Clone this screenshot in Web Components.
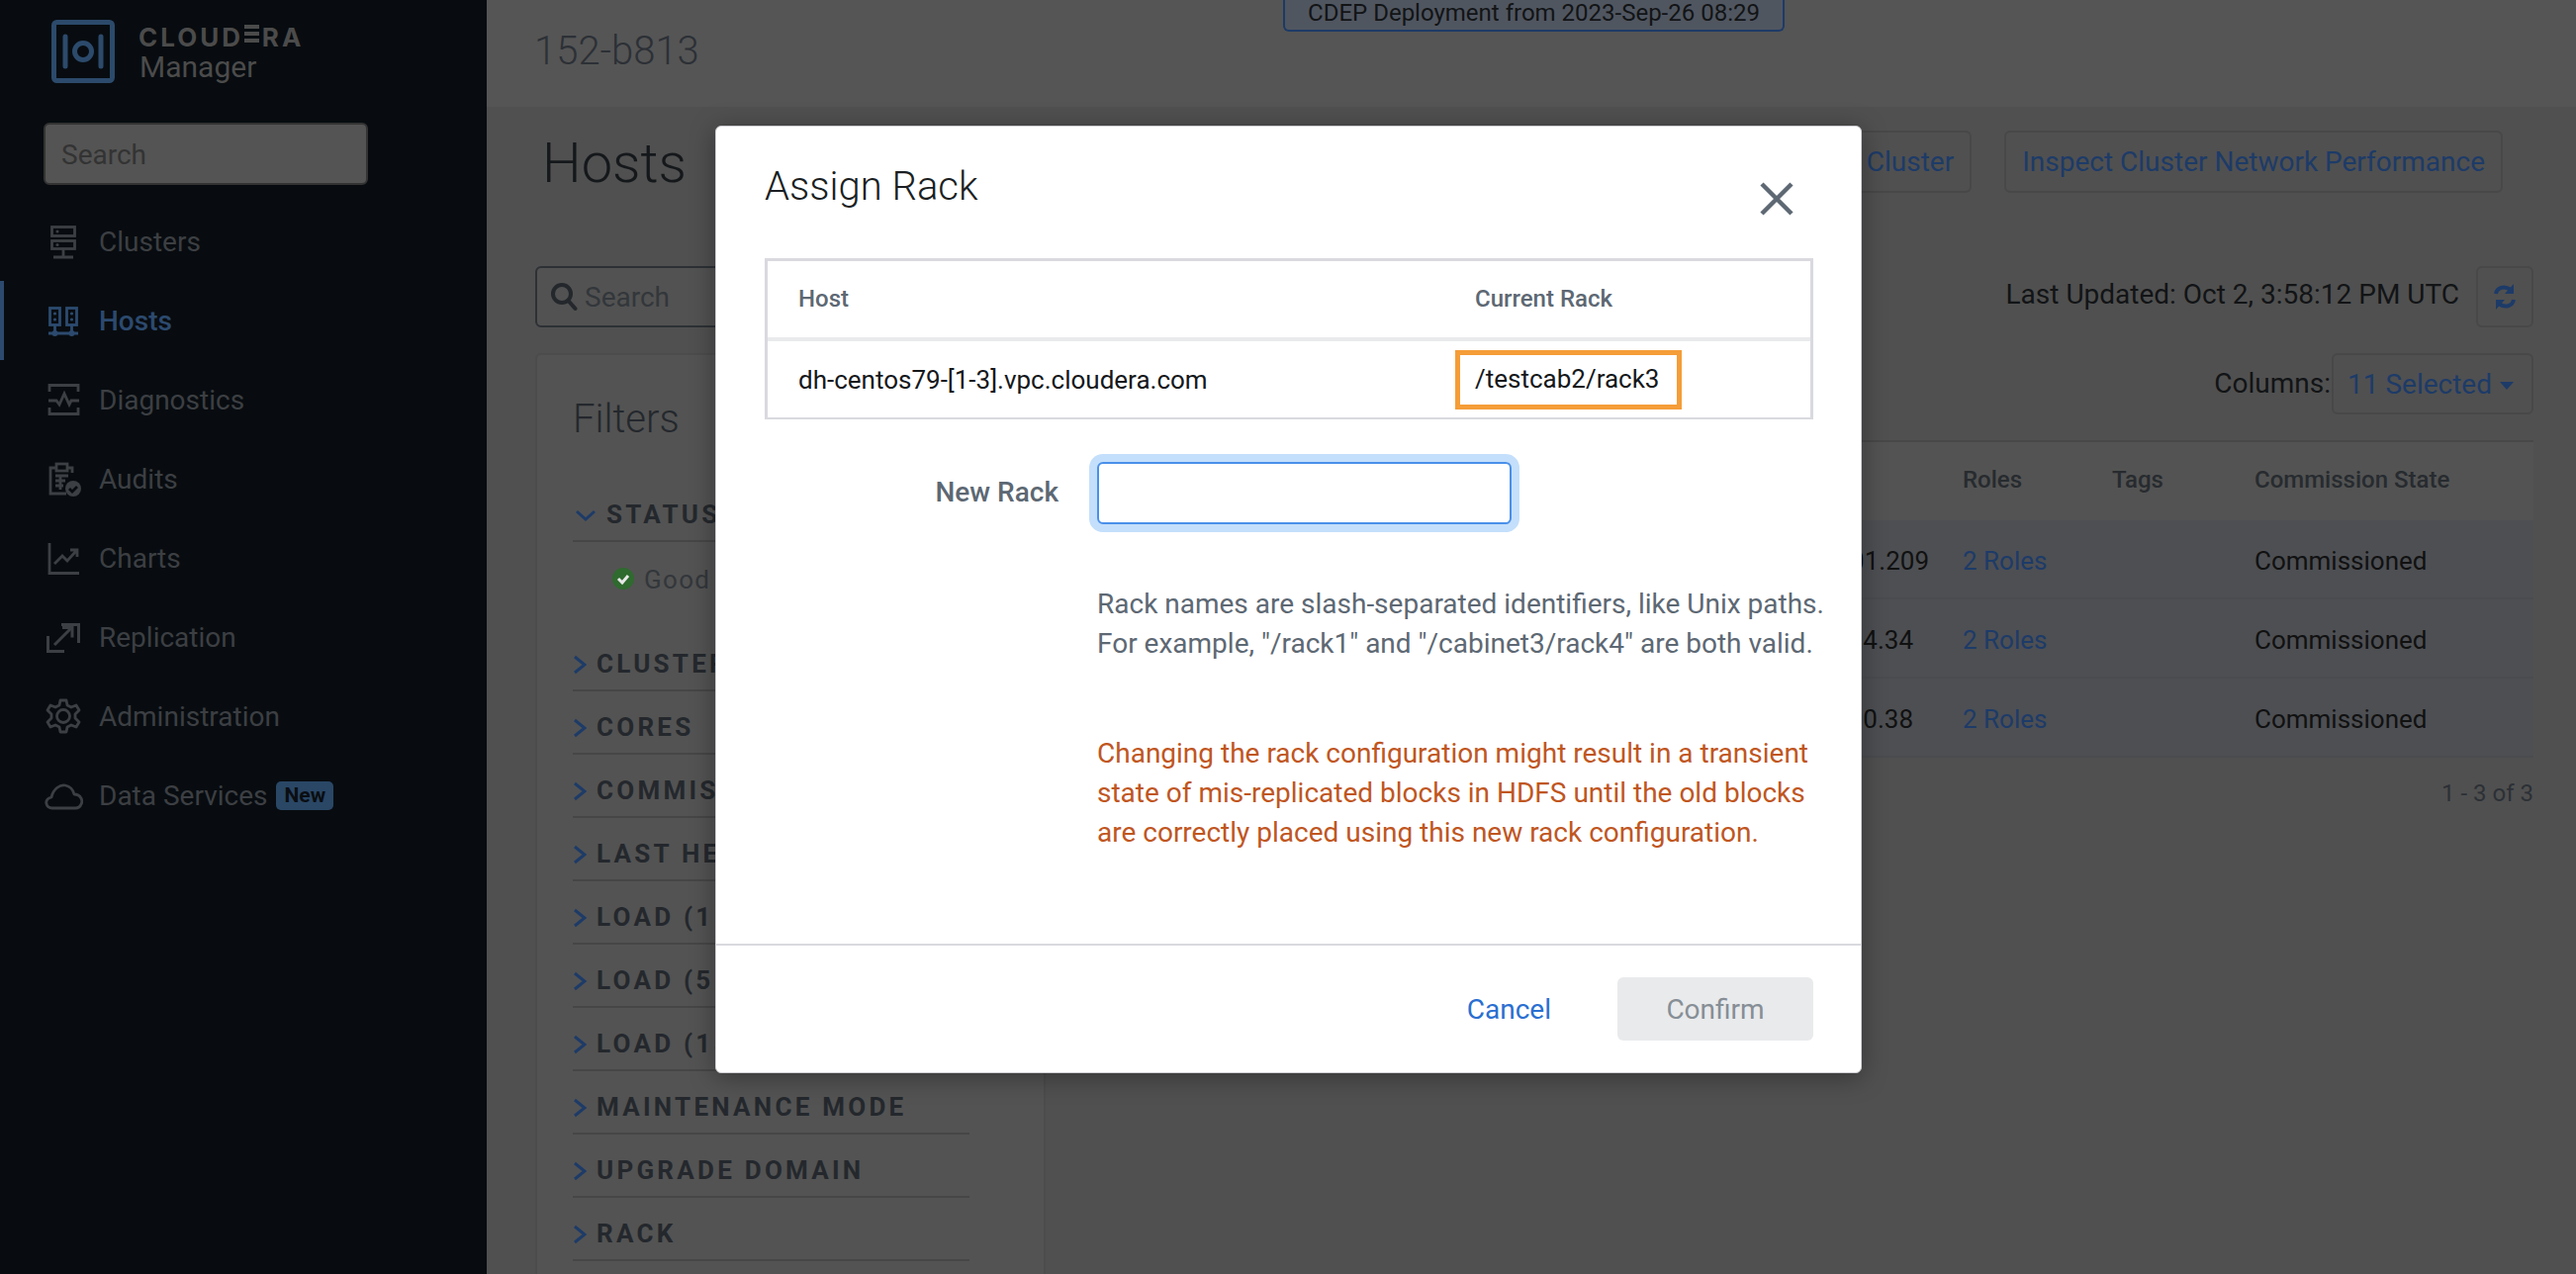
<!DOCTYPE html>
<html><head><meta charset="utf-8"><title>Assign Rack</title>
<style>
html,body{margin:0;padding:0;height:100%;overflow:hidden;background:#505050;font-family:Roboto,"Liberation Sans",sans-serif;font-size:28px;color:#121416}
cm-app{display:flex;width:2604px;height:1288px;overflow:hidden}
</style></head><body>
<cm-app>
  <cm-sidebar>
    <cm-nav-item icon="clusters">Clusters</cm-nav-item>
    <cm-nav-item icon="hosts" active>Hosts</cm-nav-item>
    <cm-nav-item icon="diagnostics">Diagnostics</cm-nav-item>
    <cm-nav-item icon="audits">Audits</cm-nav-item>
    <cm-nav-item icon="charts">Charts</cm-nav-item>
    <cm-nav-item icon="replication">Replication</cm-nav-item>
    <cm-nav-item icon="administration">Administration</cm-nav-item>
    <cm-nav-item icon="cloud" badge="New">Data Services</cm-nav-item>
  </cm-sidebar>
  <cm-main>
    <cm-filter-panel>
      <cm-filter-row open>STATUS<span slot="body">Good Health</span></cm-filter-row>
      <cm-filter-row>CLUSTERS</cm-filter-row>
      <cm-filter-row>CORES</cm-filter-row>
      <cm-filter-row>COMMISSION STATE</cm-filter-row>
      <cm-filter-row>LAST HEARTBEAT</cm-filter-row>
      <cm-filter-row>LOAD (1 MINUTE)</cm-filter-row>
      <cm-filter-row>LOAD (5 MINUTES)</cm-filter-row>
      <cm-filter-row>LOAD (15 MINUTES)</cm-filter-row>
      <cm-filter-row>MAINTENANCE MODE</cm-filter-row>
      <cm-filter-row>UPGRADE DOMAIN</cm-filter-row>
      <cm-filter-row>RACK</cm-filter-row>
    </cm-filter-panel>
  </cm-main>
  <cm-dialog></cm-dialog>
</cm-app>
<script>
const ICONS={
clusters:'<rect x="8.500" y="5.500" width="23" height="9"/><rect x="8.500" y="19.500" width="23" height="8"/><path d="M20 28v8M10 36h20"/><circle cx="14" cy="10" r="1.500" fill="currentColor" stroke="none"/><circle cx="14" cy="23.500" r="1.500" fill="currentColor" stroke="none"/>',
hosts:'<rect x="6.500" y="7.500" width="10" height="17"/><rect x="23.500" y="7.500" width="10" height="17"/><path d="M11.500 25v8M28.500 25v8M5 33h30"/><circle cx="11.500" cy="13" r="1.600" fill="currentColor" stroke="none"/><circle cx="11.500" cy="19" r="1.600" fill="currentColor" stroke="none"/><circle cx="28.500" cy="13" r="1.600" fill="currentColor" stroke="none"/><circle cx="28.500" cy="19" r="1.600" fill="currentColor" stroke="none"/><circle cx="11.500" cy="33" r="3" fill="currentColor" stroke="none"/><circle cx="28.500" cy="33" r="3" fill="currentColor" stroke="none"/>',
diagnostics:'<path d="M6 12V5.500h29V12M6 28v6.500h29V28M5 21h8l3 4 5-11 5 11 2-4h8"/>',
audits:'<path d="M29 14V9h-5M13 9H7v26h16"/><rect x="13" y="5" width="11" height="7"/><path d="M12 17h13M12 22h10M12 27h8M17 17v14"/><circle cx="30" cy="30" r="8" fill="currentColor" stroke="none"/><path d="M26 30l3 3 5-5" stroke="#080c10"/>',
charts:'<path d="M6 5v30.500h30"/><path d="M11 26l8-8 5 5 9-10M27 12h7v7"/>',
replication:'<path d="M18 7.500h17.500V26M4.500 19v15.500H21M11 28l17-17" stroke-width="3"/><path d="M19 10.500h10v10" stroke-width="3"/>',
administration:'<path d="M17 4h6l1 5 4 2 5-2 3 5-4 4v4l4 4-3 5-5-2-4 2-1 5h-6l-1-5-4-2-5 2-3-5 4-4v-4l-4-4 3-5 5 2 4-2z" stroke-linejoin="round"/><circle cx="20" cy="20" r="6.500"/>',
cloud:'<path d="M9 33C2 33 0 24 8 22 10 13 17 9 22 10c5 1 8 5 9 9 7 0 9 7 7 10-1 3-4 4-6 4z" stroke-linejoin="round"/>'};
function def(name,html,init){customElements.define(name,class extends HTMLElement{constructor(){super();this.attachShadow({mode:'open'}).innerHTML=html;}connectedCallback(){if(init)init.call(this,this.shadowRoot);}});}

def('cm-logo',`<style>
:host{display:flex;align-items:center;gap:24px;margin-left:52px;height:64px}
svg{width:64px;height:64px;display:block}
.t{display:flex;flex-direction:column;padding-top:8px}
.c{font:700 26px/24px Inter,"Liberation Sans",sans-serif;letter-spacing:3px;color:#4b4b4b;height:24px}
.e{position:relative;color:transparent;background:linear-gradient(#4b4b4b 0 4px,transparent 4px 7px,#4b4b4b 7px 11px,transparent 11px 14px,#4b4b4b 14px 18px) no-repeat 1px 3px/15px 18px}
.m{font:400 30px/36px Roboto,sans-serif;color:#4b4b4b;margin-left:1px}
</style><svg viewBox="0 0 64 64" fill="none" stroke="#2c4a6b" stroke-width="5"><rect x="2.500" y="2.500" width="59" height="59" rx="3"/><path d="M14 17v30M50 17v30" stroke-linecap="round"/><circle cx="32" cy="32" r="8.500"/></svg>
<div class="t"><div class="c">CLOUD<span class="e">E</span>RA</div><div class="m">Manager</div></div>`);

def('cm-sidebar',`<style>
:host{display:block;flex:0 0 492px;background:#080c10;padding-top:20px;box-sizing:border-box}
.s{margin:40px 0 0 44px;width:328px;height:63px;box-sizing:border-box;background:#545454;border:2px solid #333;border-radius:6px;padding-left:16px;line-height:61px;color:#333;font-size:28px}
nav{display:block;margin-top:17px}
</style><cm-logo></cm-logo><div class="s">Search</div><nav><slot></slot></nav>`);

def('cm-nav-item',`<style>
:host{display:flex;align-items:center;height:80px;padding-left:44px;color:#3c3f43;font-size:28px;line-height:32px;position:relative}
:host([active]){color:#2c4a6e;font-weight:500}
:host([active])::before{content:"";position:absolute;left:0;top:0;bottom:0;width:4px;background:#2c4a6e}
svg{width:40px;height:40px;margin-right:16px;flex:none;fill:none;stroke:currentColor;stroke-width:2.800}
.t{padding-top:1px}
.b{margin-left:9px;background:#2a4766;color:#0a0e12;font-weight:700;font-size:21px;line-height:29px;padding:0 8px;border-radius:5px}
</style><svg viewBox="0 0 40 40"></svg><span class="t"><slot></slot></span><span class="b" hidden></span>`,function(r){
 r.querySelector('svg').innerHTML=ICONS[this.getAttribute('icon')]||'';
 const b=r.querySelector('.b');if(this.hasAttribute('badge')){b.hidden=false;b.textContent=this.getAttribute('badge');}else b.remove();});

def('cm-btn',`<style>
:host{display:inline-flex;align-items:center;height:63px;box-sizing:border-box;border:2px solid #484848;border-radius:6px;padding:0 16px;color:#1d3b68;font-size:28px;white-space:nowrap}
</style><slot></slot>`);

def('cm-main',`<style>
:host{display:flex;flex-direction:column;flex:1;min-width:0;position:relative;background:#505050}
.hd{height:108px;background:#555;padding-left:48px;box-sizing:border-box;font-weight:300;font-size:40px;line-height:104px;color:#2c3036;flex:none}
.banner{position:absolute;left:805px;top:0;width:507px;height:32px;box-sizing:border-box;border:2px solid #1d3a66;border-top:0;border-radius:0 0 6px 6px;background:#505660;color:#121416;font-size:24px;line-height:24px;padding-top:1px;text-align:center}
.title{height:161px;flex:none;display:flex;padding:24px 74px 0 56px;box-sizing:border-box;gap:33px;align-items:flex-start}
h1{margin:0;font-weight:300;font-size:56px;line-height:66px;color:#15181b;flex:1}
.cols{display:grid;grid-template-columns:516px 1481px;gap:23px;padding-left:49px;flex:1;min-height:0}
.left{display:flex;flex-direction:column;gap:26px;min-height:0}
.search{height:62px;box-sizing:border-box;background:#525252;border:2px solid #2d3135;border-radius:6px;display:flex;align-items:center;gap:7px;padding-left:13px;color:#33373b;flex:none}
.search svg{width:28px;height:30px}
.right{display:flex;flex-direction:column;gap:26px}
.bar{display:flex;justify-content:flex-end;align-items:flex-start;height:62px;flex:none}
.lu{line-height:58px;margin-right:17px}
.col{line-height:62px;margin-right:1px}
.ic{width:58px;height:62px;padding:0;justify-content:center}
.dd{height:62px;padding:0 14px;width:204px}
.dd b{display:inline-block;border:7px solid transparent;border-top:8px solid #1d3b68;border-bottom:0;margin-left:8px;margin-top:4px}
</style>
<div class="hd">152-b813</div><div class="banner">CDEP Deployment from 2023-Sep-26 08:29</div>
<div class="title"><h1>Hosts</h1><cm-btn style="width:140px;justify-content:flex-end">Cluster</cm-btn><cm-btn>Inspect Cluster Network Performance</cm-btn></div>
<div class="cols"><div class="left"><div class="search"><svg viewBox="0 0 28 30" fill="none" stroke="#24282c" stroke-width="4"><circle cx="12" cy="12" r="9"/><path d="M18.500 19l7 8" stroke-linecap="round"/></svg>Search</div><slot></slot></div>
<div class="right">
<div class="bar"><span class="lu">Last Updated: Oct 2, 3:58:12 PM UTC</span><cm-btn class="ic"><svg viewBox="0 0 26 30" width="26" height="30" fill="none" stroke="#1d3b68" stroke-width="4"><path d="M4 12C5 6 12 3 19 8M22 18c-1 6-8 9-15 4"/><path d="M22 2v10h-9zM4 28V18h9z" fill="#1d3b68" stroke="none"/></svg></cm-btn></div>
<div class="bar"><span class="col">Columns:</span><cm-btn class="dd">11 Selected<b></b></cm-btn></div>
<cm-hosts-table></cm-hosts-table>
</div></div>`);

def('cm-filter-panel',`<style>
:host{display:block;flex:1;background:#535353;border:2px solid #4c4c4c;border-bottom:0;border-radius:6px 6px 0 0;padding:0 75px 0 36px;min-height:0;overflow:hidden}
h2{margin:0;height:125px;font-weight:300;font-size:40px;line-height:130px;color:#24282d}
</style><h2>Filters</h2><slot></slot>`);

def('cm-filter-row',`<style>
:host{display:block;font-weight:700;font-size:26px;letter-spacing:3.250px;color:#24282d;white-space:nowrap}
.h{display:flex;align-items:center;height:52px;padding-top:10px;border-bottom:2px solid #464646}
.l{line-height:50px}
.c{width:14px;height:24px;margin-right:10px;flex:none;fill:none;stroke:#1d3b68;stroke-width:3;margin-top:2px}
:host([open]) .c{width:22px;height:14px;margin:2px 10px 0 2px}
.b{display:none;height:87px;padding:0 0 0 40px;letter-spacing:1.300px;font-weight:400;color:#33373b;align-items:flex-start}
:host([open]) .b{display:flex}
.k{width:22px;height:22px;margin:26px 10px 0 0;flex:none}
.g{line-height:77px}
</style><div class="h"><svg class="c" viewBox="0 0 14 24"><path d="M2 4l10 8-10 8"/></svg><span class="l"><slot></slot></span></div>
<div class="b"><svg class="k" viewBox="0 0 22 22"><circle cx="11" cy="11" r="11" fill="#2f6a2e"/><path d="M6 11l4 4 6-7" fill="none" stroke="#e8e8e8" stroke-width="3"/></svg><span class="g"><slot name="body"></slot></span></div>`,function(r){
 if(this.hasAttribute('open')){r.querySelector('.c').setAttribute('viewBox','0 0 22 14');r.querySelector('.c path').setAttribute('d','M2 3l9 8 9-8');}
});

def('cm-hosts-table',`<style>
:host{display:block;position:relative;font-size:26px}
.r{display:grid;grid-template-columns:870px 185px 144px 1fr;border-bottom:2px solid #4a4c4f;height:80px;box-sizing:border-box;align-items:center}
.r>*{white-space:nowrap}
.r.hd{height:81px;border-top:2px solid #484848;border-bottom:0;background:#535353;font-weight:500;color:#272b2f;font-size:24px;padding-bottom:4px}
.r.b{background:#4d4f53;color:#111;font-size:26px;padding-top:3px}
.ip{text-align:right}
.ip.s{padding-right:16px}
a{color:#1d3b68;padding-left:34px}
.f{text-align:right;color:#2c3036;font-size:24px;margin-top:22px}
</style>
<div class="r hd"><span></span><span style="padding-left:34px">Roles</span><span>Tags</span><span>Commission State</span></div>
<div class="r b"><span class="ip">01.209</span><a>2 Roles</a><span></span><span>Commissioned</span></div>
<div class="r b"><span class="ip s">94.34</span><a>2 Roles</a><span></span><span>Commissioned</span></div>
<div class="r b"><span class="ip s">00.38</span><a>2 Roles</a><span></span><span>Commissioned</span></div>
<div class="f">1 - 3 of 3</div>`);

def('cm-dialog',`<style>
:host{display:block;position:absolute;left:723px;top:127px;width:1159px;height:958px;box-sizing:border-box;background:#fff;border-radius:6px;box-shadow:0 4px 26px rgba(0,0,0,.35);border:1px solid #cfcfd4;color:#15181b}
.hd{height:133px;padding:30px 49px 0;box-sizing:border-box;display:flex;justify-content:space-between;align-items:flex-start}
h3{margin:0;font-weight:300;font-size:40px;line-height:62px;color:#1b1f23}
.x{width:34px;height:34px;margin:26px 19px 0 0}
table{margin:0 49px;width:1060px;box-sizing:border-box;border:3px solid #d9d9df;border-collapse:separate;border-spacing:0;font-size:26px;table-layout:fixed;border-bottom-width:2px}
th{height:76px;text-align:left;font-weight:500;font-size:24px;color:#5d6873;border-bottom:4px solid #e9eaec;padding:0 0 1px 31px}
td{height:77px;padding:0 0 0 31px;color:#15181b}
.rk{display:inline-block;border:5px solid #f59d38;box-sizing:border-box;height:60px;line-height:49px;padding:0 18px 0 15px;margin-left:-20px}
.f{display:grid;grid-template-columns:346px 1fr;margin-top:34px}
label{text-align:right;font-weight:500;font-size:28px;color:#5d6873;line-height:79px}
input{display:block;margin:9px 0 0 39px;width:419px;height:63px;box-sizing:border-box;border:2px solid #4a90ea;border-radius:6px;box-shadow:0 0 0 8px #c4dffb;outline:0;background:#fff}
.help{margin:0 0 0 385px;font-size:28px;line-height:40px;color:#5d6873;width:760px;padding-top:54px}
.warn{margin:0 0 0 385px;font-size:28px;line-height:40px;color:#c0561f;width:740px;padding-top:71px}
.ft{position:absolute;left:0;right:0;top:826px;height:130px;border-top:2px solid #d9d9df;display:flex;justify-content:flex-end;align-items:center;padding-right:48px;gap:67px;box-sizing:border-box}
.c{color:#2a6fd1;font-size:28px}
.ok{width:198px;height:64px;background:#e9eaec;border-radius:6px;color:#868e96;font-size:28px;display:flex;align-items:center;justify-content:center}
</style>
<div class="hd"><h3>Assign Rack</h3><svg class="x" viewBox="0 0 34 34" fill="none" stroke="#5d6873" stroke-width="4.500"><path d="M2 2l30 30M32 2L2 32"/></svg></div>
<table><colgroup><col style="width:684px"><col></colgroup><tr><th>Host</th><th>Current Rack</th></tr><tr><td>dh-centos79-[1-3].vpc.cloudera.com</td><td><span class="rk">/testcab2/rack3</span></td></tr></table>
<div class="f"><label>New Rack</label><input aria-label="New Rack"></div>
<p class="help">Rack names are slash-separated identifiers, like Unix paths.<br>For example, "/rack1" and "/cabinet3/rack4" are both valid.</p>
<p class="warn">Changing the rack configuration might result in a transient state of mis-replicated blocks in HDFS until the old blocks are correctly placed using this new rack configuration.</p>
<div class="ft"><span class="c">Cancel</span><span class="ok">Confirm</span></div>`);
</script>
</body></html>
